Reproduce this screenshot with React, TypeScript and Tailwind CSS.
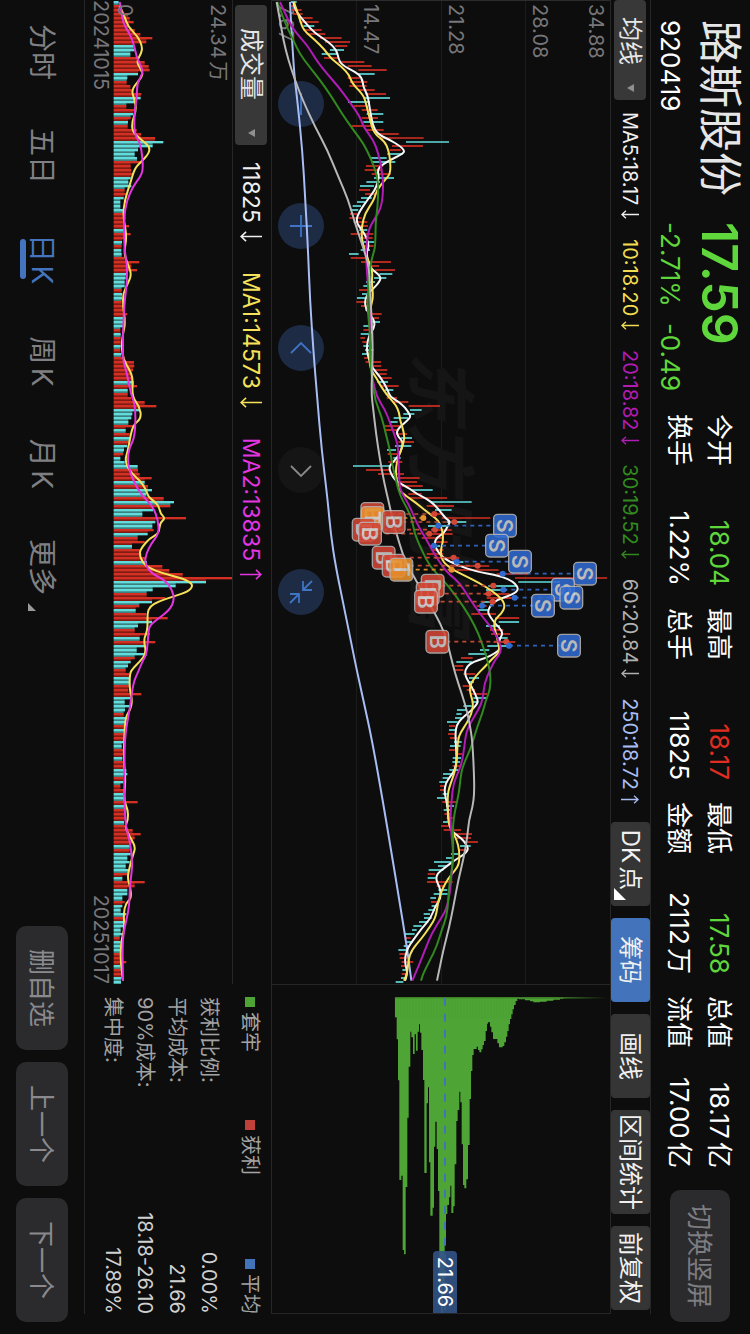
import { useState } from 'react';

type Point = [number, number];

// Three drawing units per pixel, one candle every 12 units
const STEP = 12;
const CHART_W = 2952;
const PRICE_H = 1014;
const PRICE_TOP = 1020;
const VOLUME_H = 357;
const VOLUME_TOP = 697;
const VOLUME_BASE = 342;

const UP = '#d32f22';
const DOWN = '#62dbdb';

// r = rising day, c = falling day, followed by low-high
const candleData = `
c62-80 r60-75 r65-95 r70-98 r90-128 r88-146 c100-133 r100-155 r110-166 r150-215 r165-240 r195-232
c180-222 c155-202 r162-205 r205-283 r233-305 r265-350 c262-314 r233-270 r240-292 r238-290 r265-314 r285-348
c285-360 c234-300 r252-295 r275-323 c290-340 r275-324 c280-340 r244-310 r285-341 r315-386 r330-461 c408-537
r366-459 r360-392 c352-398 c302-350 c305-376 r288-340 r284-335 r305-362 c312-372 c289-330 c270-312 r267-300
r285-315 c273-305 c261-285 c248-273 c242-265 r240-262 r238-275 r250-292 r258-294 c268-292 r242-310 r275-308
c280-312 r280-311 c272-300 c237-266 r242-290 r273-363 r290-327 r315-375 c328-367 c312-349 c288-315 c280-300
r267-295 c276-300 c261-292 r259-292 r273-300 r285-305 r300-335 r300-327 c305-330 c280-300 r280-300 c272-298
r271-285 r277-292 c280-298 c285-310 c276-300 r282-300 r287-333 r305-334 r312-352 r320-350 r330-365 c322-354
r335-386 c345-370 r345-360 r350-381 r372-415 r416-510 c420-455 c400-433 c371-415 c357-383 r345-390 r347-385
r380-411 c393-426 r385-432 c375-424 c351-378 r353-385 c370-392 r355-397 c249-360 r288-362 r324-402 r378-449
r378-441 r395-458 c425-488 r415-455 r420-531 c480-605 r470-552 c495-545 r480-515 r515-661 c530-589 c474-530
r485-545 r470-548 r455-520 r495-533 c480-510 r485-520 r470-520 r495-568 c540-580 r530-658 r560-686 r680-775
r735-1011 c745-870 c655-740 c648-710 r640-720 r650-742 c635-662 r620-650 c624-655 r604-678 r675-747 c686-747
c648-690 r660-700 r663-721 c680-713 r670-736 c652-725 c630-658 c595-650 r573-608 c559-607 r553-580 r555-580
r580-616 c597-627 c595-612 r578-605 r590-615 r600-651 c610-648 c605-625 c580-605 c561-591 c559-575 c555-580
c531-563 r537-556 c537-556 r534-556 r540-565 c552-575 c540-572 r537-565 r555-577 c548-573 c547-570 r548-574
c538-565 c519-550 c518-535 c508-529 r510-525 r510-525 c518-535 c501-525 r517-560 c528-552 c521-540 r523-540
r530-548 c519-540 r513-540 r521-573 r545-606 r560-603 r580-624 c570-602 r568-595 c543-565 c528-552 c492-545
c504-530 c476-520 r473-495 c473-497 r471-548 r500-525 c505-532 c491-533 c481-498 r483-510 c485-500 c475-495
c461-480 c462-485 c447-475 c430-455 c426-440 c405-434 r405-422 c410-428 c401-415 c385-408 r388-408 r389-410
r395-430 r393-410 c397-410 r395-410 c393-408 c377-400`;

const volumeData = `
c357 r365 r365 r385 r390 r402 r385 r405 r422 r458 r440 c402 c405 c392 r415 r435 r447 r450 c415 c383
r381 r392 r400 r425 c423 c408 r380 r405 c400 r393 c385 r384 r411 r424 r466 c491 c459 c415 c405 c412
r428 r393 r395 r402 c393 c386 c395 r375 r380 c372 c362 c362 c370 r370 r378 r375 r388 c375 r393 r380
c367 r366 c365 c366 r375 r419 r395 r412 c380 c378 c375 c375 r366 c367 c367 r366 r370 r375 r383 c377
c375 c376 r362 c363 r363 r363 c363 r362 c365 r372 r403 r404 r400 r395 r400 c402 r412 c384 r384 r395
r435 r470 c420 c398 c395 c386 r405 c378 r390 c392 r390 c383 c373 r371 c362 c375 c414 r415 r420 r456
c435 r445 c457 c440 r492 c523 r512 c460 c428 r559 c467 c458 r462 c444 r414 r435 c397 r420 r425 r438
c442 r488 r509 r549 r697 c619 c528 c459 r441 r497 c457 r419 c408 r440 r504 c457 c415 r405 r451 c420
r467 c437 c411 c442 r405 c393 c385 r378 r388 c390 c390 r390 r386 r425 c395 c375 c390 c376 r372 c377
c377 r373 c375 r372 r372 c370 c366 r370 r370 c368 r370 r375 c380 c383 r370 c371 r362 r375 c370 c374
r414 c376 r378 r378 r378 c373 r376 r399 r423 r405 r400 c390 r390 c393 c383 c390 c378 c388 r385 c368
r435 r405 c383 c383 c368 r375 c368 c363 c380 r370 c375 c370 c363 c370 r360 c363 c363 c365 r363 r363
r380 c362 r363 r366 c365 c364`;

const candles = candleData.trim().split(/\s+/).map((s) => {
  const [low, high] = s.slice(1).split('-').map(Number);
  return { up: s[0] === 'r', low, high };
});

const volumes = volumeData.trim().split(/\s+/).map((s) => ({ up: s[0] === 'r', value: Number(s.slice(1)) }));

const priceLines: { color: string; data: string }[] = [
  {
    color: '#a9bdf5',
    data: '6,60 200,70 300,82 450,97 600,106 750,114 900,120 1050,130 1200,142 1350,155 1500,173 1600,182 1700,197 1850,228 2000,258 2100,280 2220,306 2400,338 2550,363 2700,388 2850,412 2942,424',
  },
  {
    color: '#f7f7f7',
    data: '6,70 18,72 40,82 70,108 100,135 125,175 150,200 175,205 195,215 215,255 232,276 262,280 285,293 330,300 375,308 402,322 420,360 438,390 452,404 462,398 480,360 500,328 515,323 530,327 550,322 570,315 600,292 640,265 665,258 690,275 712,290 740,297 760,288 800,300 812,310 822,325 835,333 850,325 865,310 880,295 900,284 930,288 950,305 965,314 985,312 1005,297 1040,290 1065,293 1085,300 1105,308 1130,330 1155,345 1170,353 1190,360 1205,385 1222,405 1240,417 1250,422 1262,412 1280,390 1295,380 1308,383 1325,399 1345,395 1365,388 1385,370 1400,357 1420,362 1440,375 1450,390 1462,412 1472,428 1482,440 1495,468 1515,495 1540,515 1556,528 1565,541 1580,532 1600,522 1612,500 1630,493 1650,500 1675,520 1695,560 1715,620 1728,690 1742,725 1760,744 1775,742 1788,715 1800,680 1815,662 1835,653 1850,660 1870,675 1885,690 1900,698 1912,692 1930,685 1948,690 1960,675 1975,645 1985,610 2000,590 2020,584 2040,592 2060,605 2085,617 2105,625 2120,615 2135,600 2155,575 2175,560 2200,556 2240,558 2280,560 2310,555 2330,540 2350,527 2375,523 2405,530 2440,535 2480,538 2500,552 2515,575 2535,590 2550,595 2565,580 2580,555 2605,522 2620,503 2635,498 2650,503 2670,512 2695,512 2720,495 2755,482 2785,455 2820,430 2840,415 2870,405 2895,406 2915,412 2935,408 2942,405',
  },
  {
    color: '#f5e15a',
    data: '6,72 30,80 60,90 90,100 120,135 150,165 175,182 200,215 225,238 250,246 285,280 310,288 360,300 400,312 425,345 450,355 475,360 520,362 540,345 570,320 600,312 640,285 680,275 720,275 750,285 780,293 810,308 850,305 890,310 920,302 960,297 1000,302 1040,300 1080,298 1110,302 1135,320 1160,333 1190,355 1215,378 1240,388 1260,390 1280,397 1310,404 1340,398 1370,385 1400,378 1430,378 1455,384 1470,388 1482,400 1510,440 1535,470 1560,505 1590,517 1620,520 1650,512 1680,515 1705,540 1725,580 1750,630 1775,670 1800,698 1820,705 1840,695 1858,675 1880,672 1900,678 1930,685 1955,690 1975,668 2000,645 2030,615 2060,598 2085,602 2110,610 2140,605 2170,590 2200,570 2218,565 2240,562 2290,560 2320,553 2350,542 2380,533 2430,533 2470,535 2495,548 2520,560 2550,568 2590,568 2610,556 2635,535 2665,518 2700,505 2750,498 2780,480 2815,455 2850,425 2880,415 2920,412 2942,402',
  },
  {
    color: '#b01cb5',
    data: '6,30 40,45 80,65 110,88 140,115 180,138 220,170 260,205 300,235 350,270 380,280 420,310 460,325 510,336 560,340 610,336 640,325 670,305 700,293 740,290 760,287 800,290 850,293 900,300 1000,300 1060,302 1100,303 1140,308 1190,320 1230,345 1260,357 1300,372 1340,385 1400,386 1440,388 1470,390 1520,420 1570,440 1620,470 1660,492 1700,518 1720,535 1750,570 1790,595 1830,622 1860,645 1890,670 1930,690 1955,694 1980,675 2010,660 2050,643 2100,638 2130,625 2170,600 2200,588 2240,583 2280,577 2310,568 2350,550 2400,545 2450,541 2500,544 2560,550 2620,545 2680,540 2730,528 2760,510 2800,485 2850,465 2900,445 2942,427',
  },
  {
    color: '#32891f',
    data: '6,22 40,35 80,50 120,70 160,88 200,118 240,150 290,185 340,215 390,250 430,280 470,300 520,320 560,325 620,323 660,317 740,316 760,310 800,300 850,297 900,292 950,295 1000,300 1060,300 1100,302 1150,308 1200,315 1250,335 1300,347 1350,360 1400,368 1440,378 1470,385 1500,397 1550,425 1600,433 1650,455 1700,480 1740,520 1790,560 1850,600 1900,625 1950,643 1990,655 2030,662 2070,660 2100,648 2140,637 2180,622 2220,610 2250,600 2290,582 2320,573 2380,567 2430,555 2480,548 2540,550 2600,548 2650,538 2700,535 2750,530 2790,515 2840,500 2880,480 2920,460 2942,453',
  },
  {
    color: '#b8b8b8',
    data: '6,20 60,30 120,40 180,55 240,75 300,98 380,135 450,172 530,205 600,235 660,252 720,272 760,285 800,297 900,302 1000,307 1050,308 1100,307 1180,304 1230,310 1300,318 1380,330 1450,343 1500,355 1560,368 1630,388 1690,408 1730,432 1790,465 1840,495 1900,525 1960,540 2020,555 2080,575 2140,593 2200,604 2240,608 2320,612 2380,613 2420,608 2460,597 2510,592 2570,582 2640,565 2720,550 2780,538 2850,520 2942,501',
  },
];

const volumeLines: { color: string; data: string }[] = [
  {
    color: '#f5e15a',
    data: '18,360 50,375 80,385 110,415 140,428 160,425 185,410 210,425 225,430 245,415 270,395 300,405 330,410 365,397 395,398 420,425 440,450 460,448 485,425 505,405 550,392 600,375 650,370 710,382 760,372 800,388 825,395 850,385 880,370 920,370 970,377 1000,370 1040,365 1080,372 1110,390 1135,400 1190,397 1220,420 1255,425 1275,400 1320,390 1350,385 1385,375 1420,395 1440,420 1470,440 1490,445 1505,465 1520,478 1540,482 1555,497 1570,480 1600,478 1615,450 1640,428 1660,418 1690,430 1705,450 1720,490 1735,545 1745,570 1758,580 1775,565 1790,520 1805,475 1820,450 1840,443 1880,444 1900,440 1920,432 1960,440 1985,420 2005,400 2020,390 2070,390 2100,398 2130,392 2150,378 2200,374 2280,372 2340,378 2400,372 2430,385 2460,385 2480,376 2510,390 2540,408 2565,400 2600,390 2635,383 2660,392 2695,395 2710,378 2740,372 2790,374 2820,365 2880,362 2942,370',
  },
  {
    color: '#e335e0',
    data: '6,360 30,365 70,370 100,390 140,405 170,410 200,425 220,430 250,412 290,412 330,405 400,403 430,422 470,428 510,430 530,422 560,400 600,382 650,373 750,374 790,382 850,382 900,375 990,370 1050,370 1080,370 1120,382 1180,393 1220,408 1310,406 1340,390 1380,383 1420,392 1460,410 1490,430 1520,460 1560,475 1600,478 1630,455 1660,440 1690,435 1720,455 1740,495 1770,518 1800,524 1830,510 1860,470 1880,447 1920,445 1965,440 1980,430 2010,418 2050,400 2120,392 2200,376 2300,374 2400,374 2480,378 2520,390 2580,398 2620,396 2660,390 2700,390 2740,385 2780,375 2830,368 2942,370',
  },
];

// x, badge level, price level the dashed line leads to
const trades: { side: 'B' | 'S' | 'T'; x: number; at: number; price: number }[] = [
  { side: 'B', x: 1542, at: 307, price: 493 },
  { side: 'T', x: 1554, at: 308, price: 460 },
  { side: 'B', x: 1566, at: 371, price: 553 },
  { side: 'B', x: 1589, at: 281, price: 495 },
  { side: 'B', x: 1601, at: 300, price: 478 },
  { side: 'B', x: 1673, at: 341, price: 551 },
  { side: 'B', x: 1697, at: 371, price: 623 },
  { side: 'T', x: 1709, at: 394, price: 545 },
  { side: 'B', x: 1757, at: 488, price: 670 },
  { side: 'B', x: 1781, at: 473, price: 656 },
  { side: 'B', x: 1805, at: 468, price: 668 },
  { side: 'B', x: 1925, at: 502, price: 709 },
  { side: 'S', x: 1577, at: 705, price: 505 },
  { side: 'S', x: 1637, at: 681, price: 492 },
  { side: 'S', x: 1685, at: 750, price: 560 },
  { side: 'S', x: 1721, at: 945, price: 698 },
  { side: 'S', x: 1769, at: 879, price: 700 },
  { side: 'S', x: 1793, at: 904, price: 734 },
  { side: 'S', x: 1817, at: 819, price: 636 },
  { side: 'S', x: 1937, at: 897, price: 717 },
];

const tradeColors = {
  B: { fill: '#d24735', line: '#c04a35' },
  T: { fill: '#e8912c', line: '#d58a2a' },
  S: { fill: '#2f6ad0', line: '#2f62bd' },
};

// price level, holding size
const chips: Point[] = [
  [375, 97], [380, 163], [384, 286], [388, 585], [394, 572], [398, 795], [402, 808], [407, 606], [412, 398],
  [416, 245], [421, 140], [424, 157], [429, 207], [434, 148], [438, 197], [443, 140], [447, 118], [450, 143],
  [454, 195], [459, 285], [463, 564], [470, 355], [474, 307], [477, 532], [481, 692], [488, 668], [492, 485],
  [496, 410], [500, 492], [504, 618], [508, 900], [513, 984], [519, 900], [524, 780], [528, 687], [532, 660],
  [537, 637], [541, 602], [544, 684], [550, 664], [554, 538], [559, 408], [563, 375], [568, 320], [571, 352],
  [575, 478], [579, 600], [583, 610], [589, 583], [594, 480], [599, 342], [603, 258], [607, 210], [611, 192],
  [620, 185], [624, 195], [628, 202], [634, 193], [638, 180], [642, 168], [647, 138], [651, 116], [654, 112],
  [660, 125], [664, 142], [669, 162], [682, 175], [687, 187], [698, 183], [703, 172], [708, 155], [712, 138],
  [716, 118], [720, 102], [724, 88], [728, 73], [732, 60], [737, 48], [742, 41], [747, 43], [765, 46],
  [780, 49], [790, 52], [810, 50], [830, 47], [850, 44], [870, 41],
];

const quotes = [
  [
    { label: '今开', value: '18.04', color: 'text-[#5fd63b]' },
    { label: '换手', value: '1.22%', color: 'text-white' },
  ],
  [
    { label: '最高', value: '18.17', color: 'text-[#e02d20]' },
    { label: '总手', value: '11825', color: 'text-white' },
  ],
  [
    { label: '最低', value: '17.58', color: 'text-[#5fd63b]' },
    { label: '金额', value: '2112万', color: 'text-white' },
  ],
  [
    { label: '总值', value: '18.17亿', color: 'text-white' },
    { label: '流值', value: '17.00亿', color: 'text-white' },
  ],
];

const averages = [
  { text: 'MA5:18.17', up: false, color: 'text-[#f0f0f0]' },
  { text: '10:18.20', up: false, color: 'text-[#f0dc50]' },
  { text: '20:18.82', up: false, color: 'text-[#b01cb5]' },
  { text: '30:19.52', up: false, color: 'text-[#32891f]' },
  { text: '60:20.84', up: false, color: 'text-[#b0b0b0]' },
  { text: '250:18.72', up: true, color: 'text-[#a9bdf5]' },
];

const volumeAverages = [
  { text: '11825', up: false, color: 'text-[#f0f0f0]' },
  { text: 'MA1:14573', up: false, color: 'text-[#f5e15a]' },
  { text: 'MA2:13835', up: true, color: 'text-[#e335e0]' },
];

const legend = [
  { label: '套牢', color: 'bg-[#4ea435]' },
  { label: '获利', color: 'bg-[#c0403a]' },
  { label: '平均', color: 'bg-[#4273bb]' },
];

const costs = [
  { label: '获利比例:', value: '0.00%' },
  { label: '平均成本:', value: '21.66' },
  { label: '90%成本:', value: '18.18-26.10' },
  { label: '集中度:', value: '17.89%' },
];

const periods = ['分时', '五日', '日K', '周K', '月K', '更多'];

function smoothPath(data: string, top: number) {
  const pts = data.split(' ').map((p) => p.split(',').map(Number) as Point);
  let d = `M${pts[0][0]} ${top - pts[0][1]}`;
  for (let i = 1; i < pts.length - 1; i++) {
    const [x, y] = pts[i];
    const [nx, ny] = pts[i + 1];
    d += `Q${x} ${top - y} ${(x + nx) / 2} ${top - (y + ny) / 2}`;
  }
  const last = pts[pts.length - 1];
  return `${d}L${last[0]} ${top - last[1]}`;
}

function chipPath() {
  let d = `M38 ${PRICE_TOP - 375}`;
  chips.forEach(([level, size], i) => {
    const next = i < chips.length - 1 ? chips[i + 1][0] : 880;
    d += `L${size} ${PRICE_TOP - level}L${size} ${PRICE_TOP - next}`;
  });
  return `${d}L38 ${PRICE_TOP - 880}Z`;
}

function Arrow({ up, className }: { up: boolean; className: string }) {
  return (
    <svg viewBox="0 0 10 20" className={className} fill="none" stroke="currentColor" strokeWidth="1.4" aria-hidden="true">
      {up ? <path d="M5 20V1M0.8 5.5L5 1L9.2 5.5" /> : <path d="M5 0V19M0.8 14.5L5 19L9.2 14.5" />}
    </svg>
  );
}

function IndicatorSelect({ name, options, className }: { name: string; options: string[]; className: string }) {
  return (
    <div className="relative">
      <select
        aria-label={name}
        className={`h-8 appearance-none rounded bg-[#383838] text-2xl leading-8 text-[#e6e6e6] outline-none ${className}`}
      >
        {options.map((o) => (
          <option key={o}>{o}</option>
        ))}
      </select>
      <svg viewBox="0 0 8 7" className="pointer-events-none absolute top-3 right-2 h-[7px] w-2" fill="#909090">
        <path d="M0 0H8L4 7Z" />
      </svg>
    </div>
  );
}

function PriceChart() {
  return (
    <svg viewBox={`0 0 ${CHART_W} ${PRICE_H}`} className="pointer-events-none relative block h-full w-full" role="img">
      <path d="M1.5 0V1014" stroke="#2c2c2c" strokeWidth="3" />
      {candles.map((c, i) => (
        <line
          key={i}
          x1={i * STEP + 6}
          x2={i * STEP + 6}
          y1={PRICE_TOP - c.low}
          y2={PRICE_TOP - c.high}
          stroke={c.up ? UP : DOWN}
          strokeWidth="5"
        />
      ))}
      {priceLines.map((l) => (
        <path key={l.color} d={smoothPath(l.data, PRICE_TOP)} fill="none" stroke={l.color} strokeWidth="6" strokeLinejoin="round" />
      ))}
      {trades.map((t, i) => (
        <g key={i}>
          <line
            x1={t.x}
            x2={t.x}
            y1={PRICE_TOP - t.price}
            y2={PRICE_TOP - t.at}
            stroke={tradeColors[t.side].line}
            strokeWidth="5"
            strokeDasharray="12 12"
          />
          <circle cx={t.x} cy={PRICE_TOP - t.price} r="9" fill={tradeColors[t.side].fill} />
        </g>
      ))}
      {trades.map((t, i) => (
        <g key={i} opacity="0.88">
          <rect
            x={t.x - 34}
            y={PRICE_TOP - t.at - 34}
            width="68"
            height="68"
            rx="12"
            fill={tradeColors[t.side].fill}
            stroke="#b9b4b4"
            strokeWidth="4"
          />
          <text x={t.x} y={PRICE_TOP - t.at + 23} textAnchor="middle" fontSize="64" fontWeight="600" fill="#d0d0d0">
            {t.side}
          </text>
        </g>
      ))}
    </svg>
  );
}

function ChipChart() {
  return (
    <svg viewBox="0 0 984 1014" className="block h-full w-full" role="img">
      <defs>
        <linearGradient id="tail" x1="0" y1="1" x2="0" y2="0">
          <stop offset="0" stopColor="#3d8029" />
          <stop offset="0.4" stopColor="#3d8029" />
          <stop offset="1" stopColor="#3d8029" stopOpacity="0" />
        </linearGradient>
      </defs>
      <path d={chipPath()} fill="#4ea435" />
      <rect x="36" y="8" width="5" height="260" fill="url(#tail)" />
      <rect x="36" y="268" width="4" height="377" fill="#3d8029" />
      {Array.from({ length: 40 }, (_, i) => (
        <line key={i} x1="38" x2="100" y1={645 - i * 9} y2={645 - i * 9} stroke="#3f8f2b" strokeWidth="1" opacity="0.5" />
      ))}
      <line x1="38" x2="984" y1="495" y2="495" stroke="#4273bb" strokeWidth="6" strokeDasharray="24 24" />
    </svg>
  );
}

function VolumeChart() {
  return (
    <svg viewBox={`0 0 ${CHART_W} ${VOLUME_H}`} className="block w-full" role="img">
      {volumes.map((v, i) => {
        const next = volumes[i + 1] ?? v;
        const top = Math.min(v.value, next.value);
        return (
          <rect
            key={i}
            x={i * STEP + 8}
            y={VOLUME_TOP - top}
            width="8"
            height={top - VOLUME_BASE}
            fill={v.up ? '#7d1d16' : '#3b7f7f'}
          />
        );
      })}
      {volumes.map((v, i) => (
        <rect
          key={i}
          x={i * STEP + 3}
          y={VOLUME_TOP - v.value}
          width="7"
          height={v.value - VOLUME_BASE}
          fill={v.up ? UP : DOWN}
        />
      ))}
      {volumeLines.map((l) => (
        <path key={l.color} d={smoothPath(l.data, VOLUME_TOP)} fill="none" stroke={l.color} strokeWidth="6" strokeLinejoin="round" />
      ))}
    </svg>
  );
}

const controls = [
  { label: '缩小', path: 'M12 23H34', active: true },
  { label: '放大', path: 'M12 23H34M23 12V34', active: true },
  { label: '左移', path: 'M28 13L18 23L28 33', active: true },
  { label: '右移', path: 'M19 13L29 23L19 33', active: false },
  { label: '收起', path: 'M12 12L21 21M21 12V21H12M34 34L25 25M25 34V25H34', active: true },
];

export default function App() {
  const [period, setPeriod] = useState('日K');

  return (
    <div className="h-screen w-screen overflow-hidden bg-[#0d0d0d]">
      {/* landscape page shown on a portrait screen */}
      <div className="flex h-[100vw] w-[100vh] origin-top-left translate-x-[100vw] rotate-90 flex-col font-['Inter','Noto_Sans_CJK_SC',sans-serif] text-white [text-autospace:normal]">
        <header className="flex h-[99px] shrink-0 gap-[22px] pr-3 pl-5">
          <div className="flex w-[372px] shrink-0 gap-[26px]">
            <div>
              <h1 className="mt-1 text-[44px] leading-[52px] text-[#e6e6e6]">路斯股份</h1>
              <p className="mt-2 text-[26px] leading-8">920419</p>
            </div>
            <div className="text-[#5fd63b]">
              <p className="mt-1 text-[50px] leading-[52px] font-semibold">17.59</p>
              <p className="mt-2 flex gap-4 text-[26px] leading-8">
                <span>-2.71%</span>
                <span>-0.49</span>
              </p>
            </div>
          </div>
          <div className="grid flex-1 grid-cols-4 gap-x-[22px] pt-[11px]">
            {quotes.map((col) => (
              <dl key={col[0].label} className="text-[26px] leading-10">
                {col.map((q) => (
                  <div key={q.label} className="flex justify-between">
                    <dt>{q.label}</dt>
                    <dd className={q.color}>{q.value}</dd>
                  </div>
                ))}
              </dl>
            ))}
          </div>
          <button className="mt-5 h-[60px] w-[132px] shrink-0 rounded-[10px] bg-[#2b2b2d] text-[26px] text-[#7d7d81]">
            切换竖屏
          </button>
        </header>

        <main className="mr-5 flex min-h-0 flex-1 flex-col">
          <div className="flex h-[41px] shrink-0 items-center border-y border-[#262626]">
            <IndicatorSelect name="主图指标" options={['均线', 'BOLL']} className="w-[100px] pl-[17px]" />
            <ul className="flex flex-1 justify-between pr-[18px] pl-3 text-xl">
              {averages.map((a) => (
                <li key={a.text} className={`flex items-center gap-[5px] ${a.color}`}>
                  {a.text}
                  <Arrow up={a.up} className="h-[18px] w-[9px]" />
                </li>
              ))}
            </ul>
            <div className="flex h-full gap-3 pr-1 text-2xl text-[#f0f0f0]">
              <button className="relative w-[84px] rounded bg-[#353535] pr-2">
                DK点
                <svg viewBox="0 0 12 12" className="absolute right-1.5 bottom-[3px] size-3" fill="#ffffff">
                  <path d="M12 0V12H0Z" />
                </svg>
              </button>
              <button className="w-[84px] rounded bg-[#4273bb]">筹码</button>
              <button className="w-[84px] rounded bg-[#353535]">画线</button>
              <button className="w-[104px] rounded bg-[#353535]">区间统计</button>
              <button className="w-[84px] rounded bg-[#353535]">前复权</button>
            </div>
          </div>

          <div className="grid min-h-0 flex-1 grid-cols-[minmax(0,1fr)_330px]">
            <section className="relative min-h-0" aria-label="K线图">
              <div className="absolute inset-0 grid grid-rows-4 text-xl leading-6 text-[#77777b]">
                <div className="flex flex-col justify-between border-b border-[#1c1c1c] pt-0.5 pb-0.5 pl-1">
                  <span>34.88</span>
                  <span>28.08</span>
                </div>
                <div className="flex items-end border-b border-[#1c1c1c] pb-0.5 pl-1">21.28</div>
                <div className="flex items-end border-b border-[#1c1c1c] pb-0.5 pl-1">14.47</div>
                <div className="flex items-end pb-0.5 pl-1">7.67</div>
              </div>
              <div className="absolute inset-0 flex items-center justify-center text-[70px] font-bold text-[#151515] italic">
                东方财富
              </div>
              <div className="absolute bottom-1.5 left-[81px] flex gap-[76px]">
                {controls.map((c) => (
                  <button
                    key={c.label}
                    aria-label={c.label}
                    className={`size-[46px] rounded-full ${c.active ? 'bg-[#1d2b44] text-[#3f73c4]' : 'bg-[#151515] text-[#8a8a8a]'}`}
                  >
                    <svg viewBox="0 0 46 46" fill="none" stroke="currentColor" strokeWidth="1.8">
                      <path d={c.path} />
                    </svg>
                  </button>
                ))}
              </div>
              <PriceChart />
            </section>
            <section className="relative min-h-0 border-x border-[#262626]" aria-label="筹码分布">
              <ChipChart />
              <span className="absolute right-0 bottom-[161px] h-6 w-[62px] rounded-l bg-[#325386]/90 text-center text-xl leading-6">
                21.66
              </span>
            </section>
          </div>

          <div className="grid shrink-0 grid-cols-[minmax(0,1fr)_330px] border-y border-[#262626]">
            <section aria-label="成交量">
              <div className="flex h-[39px] items-center gap-[17px] border-b border-[#262626] pt-0.5 pl-[5px]">
                <IndicatorSelect name="副图指标" options={['成交量', 'MACD']} className="w-[140px] pl-[23px]" />
                <ul className="flex gap-[30px] text-[23px]">
                  {volumeAverages.map((a) => (
                    <li key={a.text} className={`flex items-center gap-2 ${a.color}`}>
                      {a.text}
                      <Arrow up={a.up} className="h-[22px] w-[11px]" />
                    </li>
                  ))}
                </ul>
              </div>
              <div className="relative">
                <VolumeChart />
                <div className="absolute inset-0 flex flex-col justify-between pt-0.5 pl-1 text-xl leading-6 text-[#77777b]">
                  <span>24.34万</span>
                  <span>0</span>
                </div>
              </div>
              <div className="flex h-7 justify-between text-xl leading-6 text-[#77777b]">
                <time>20241015</time>
                <time>20251017</time>
              </div>
            </section>
            <section className="pl-[13px] text-xl" aria-label="筹码统计">
              <ul className="mb-1 grid h-[42px] grid-cols-[123px_1fr_auto] items-center text-[#a3a3a3]">
                {legend.map((l) => (
                  <li key={l.label} className="flex items-center gap-[5px]">
                    <span className={`size-[10px] ${l.color}`} />
                    {l.label}
                  </li>
                ))}
              </ul>
              <dl className="leading-8">
                {costs.map((c) => (
                  <div key={c.label} className="flex justify-between">
                    <dt className="text-[#a3a3a3]">{c.label}</dt>
                    <dd className="text-[#d0d0d0]">{c.value}</dd>
                  </div>
                ))}
              </dl>
            </section>
          </div>
        </main>

        <footer className="flex h-[84px] shrink-0 items-center justify-between pr-3">
          <nav className="flex text-[28px] text-[#808084]">
            {periods.map((p) => (
              <button
                key={p}
                onClick={() => setPeriod(p)}
                className={`relative leading-10 ${p.endsWith('K') ? 'px-[26px]' : 'px-6'} ${p === period ? 'text-[#4574bf]' : ''}`}
              >
                {p}
                {p === period && (
                  <span className="absolute -bottom-0.5 left-1/2 h-[6px] w-10 -translate-x-1/2 rounded-full bg-[#4574bf]" />
                )}
                {p === '更多' && (
                  <svg viewBox="0 0 8 8" className="absolute right-2 bottom-1.5 size-2" fill="#9a9a9a">
                    <path d="M8 0V8H0Z" />
                  </svg>
                )}
              </button>
            ))}
          </nav>
          <div className="flex gap-3 text-[26px] text-[#8a8a8e]">
            <button className="h-[52px] w-[124px] rounded-[10px] bg-[#2b2b2d]">删自选</button>
            <button className="h-[52px] w-[124px] rounded-[10px] bg-[#2b2b2d]">上一个</button>
            <button className="h-[52px] w-[124px] rounded-[10px] bg-[#2b2b2d]">下一个</button>
          </div>
        </footer>
      </div>
    </div>
  );
}
